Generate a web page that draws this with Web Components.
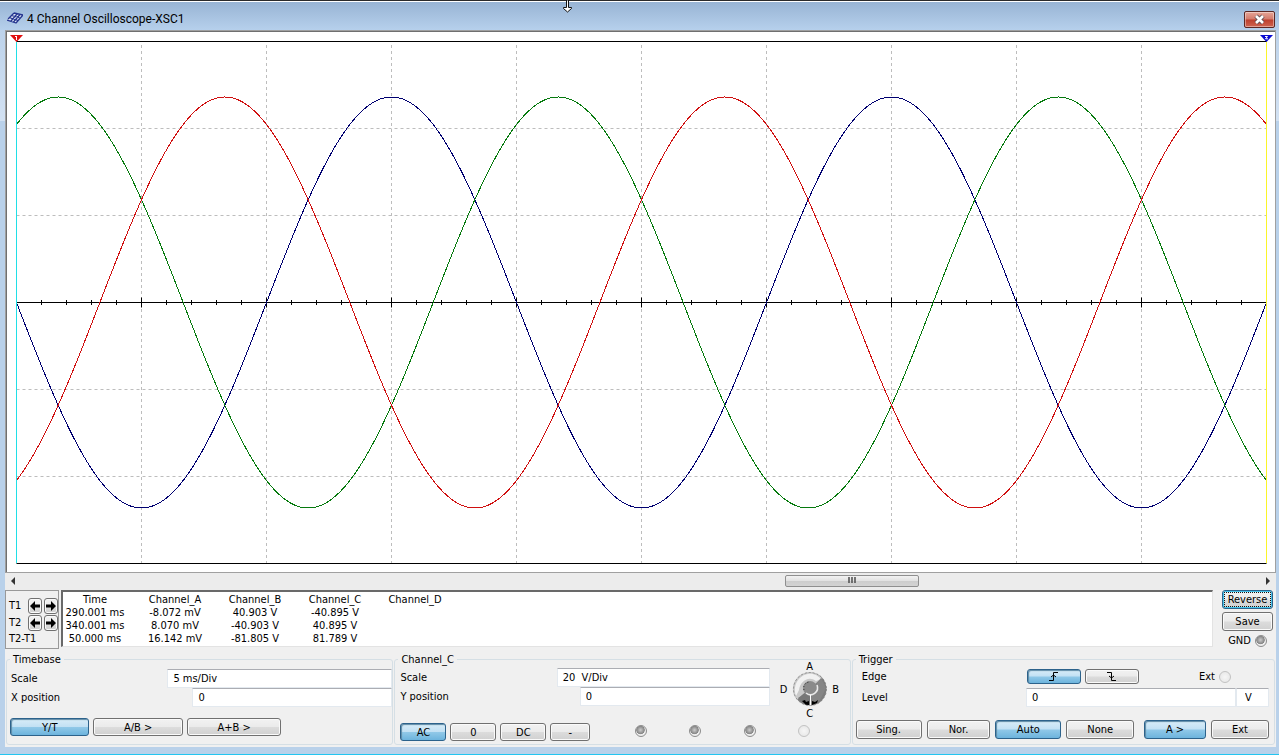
<!DOCTYPE html>
<html lang="en">
<head>
<meta charset="utf-8">
<title>4 Channel Oscilloscope-XSC1</title>
<style>
  body { margin: 0; min-height: 100vh; display: flex; font: 11px/13px "DejaVu Sans Condensed", "Noto Sans", sans-serif; color: #000; }
</style>
</head>
<body>
<scope-window heading="4 Channel Oscilloscope-XSC1">
  <scope-display></scope-display>
  <scope-scrollbar></scope-scrollbar>
  <scope-readout></scope-readout>
  <scope-settings></scope-settings>
</scope-window>

<script>
function define(name, markup, setup) {
  const template = document.createElement('template');
  template.innerHTML = markup;
  customElements.define(name, class extends HTMLElement {
    connectedCallback() {
      if (this.shadowRoot) return;
      this.attachShadow({ mode: 'open' }).append(template.content.cloneNode(true));
      if (setup) setup(this, this.shadowRoot);
    }
  });
}

define('scope-window', `
<style>
  :host { flex: 1; display: flex; flex-direction: column; box-sizing: border-box; position: relative;
    background: linear-gradient(#b9d1ea, #b9d1ea) bottom / 100% calc(100% - 120px) no-repeat, linear-gradient(#b6cee8, #d2e1f2 118px);
    border-top: 1px solid #2a2a2a; border-bottom: 1px solid #22c5f0; }
  header { display: flex; align-items: center; height: 28px; padding: 0 4px 0 7px; gap: 4px; border-top: 1px solid #fff;
    background: linear-gradient(#98b4d4, #b6d0ec); font: 12px/16px Roboto, "Noto Sans", sans-serif; }
  h1 { flex: 1; margin: 0; padding-top: 6px; font: inherit; }
  .icon { margin-top: 3px; }
  .close { width: 31px; height: 17px; margin-top: 6px; padding: 0; display: grid; place-items: center; border: 1px solid #5c2723; border-radius: 2px;
    background: linear-gradient(#e6a597, #d47a6b 48%, #bd3f2d 52%, #cf6450); box-shadow: inset 0 0 0 1px #ffffff66; }
  main { flex: 1; display: flex; flex-direction: column; margin: 0 3px 7px 5px; background: #f0f0f0; }
  .pointer { position: absolute; left: 562px; top: -1px; }
</style>
<header>
  <svg class="icon" width="16" height="12" viewBox="0 0 16 12" aria-hidden="true">
    <path d="M0 7 7 1 16 3 9 11z" fill="#dfe6f5"/>
    <path d="M7 1 16 3M4.500 3.500 13 6M2 5.500 11 8.500M0 8 9 11M7 1 1 7M10 2 4 9M13 2.500 6.500 10M16 3 9 11" stroke="#25358f" stroke-width="1.3" fill="none"/>
  </svg>
  <h1></h1>
  <button class="close" aria-label="Close"><svg width="13" height="11" viewBox="0 0 13 11"><path d="M3 2 10 9M10 2 3 9" stroke="#5d4b51" stroke-width="4.4"/><path d="M3 2 10 9M10 2 3 9" stroke="#fff" stroke-width="2.6"/></svg></button>
</header>
<main><slot></slot></main>
<svg class="pointer" width="11" height="13" viewBox="0 0 11 13" aria-hidden="true"><path d="M4.500 0V7.500H1.500V8.500L5.500 12 9.500 8.500V7.500H6.500V0z" fill="#fff" stroke="#111"/></svg>
`, (host, root) => { root.querySelector('h1').textContent = host.getAttribute('heading'); });

define('scope-display', `
<style>
  :host { flex: 1; display: flex; min-height: 300px; background: #fff; border: solid; border-width: 2px 1px 1px 2px; border-color: #6f6f6f #e3e3e3 #5a5a5a #6f6f6f; outline: 1px solid #a0a0a0; outline-offset: -1px; }
  svg { flex: 1; width: 0; height: auto; }
</style>
<svg viewBox="7 32 1268 540" preserveAspectRatio="none" role="img" aria-label="Three phase waveforms" fill="none" stroke-width="1"></svg>
`, (host, root) => {
  const left = 16.5, width = 1250, top = 41.5, mid = 302.5, bottom = 563.5;
  const period = 500, amplitude = 205.5;
  let grid = '', ticks = '';
  for (let i = 1; i < 10; i++) grid += `M${left + i * 125} 45V${bottom}`;
  for (const k of [-2, -1, 1, 2]) grid += `M${left} ${mid + k * 87}H${left + width}`;
  for (let i = 1; i < 50; i++) {
    const r = i % 5 ? 2.5 : 5;
    ticks += `M${left + i * 25} ${mid - r}V${mid + r}`;
  }
  const wave = peak => {
    let d = '';
    for (let x = 0; x <= width; x += 2) {
      const y = mid - amplitude * Math.cos(2 * Math.PI * (x - peak) / period);
      d += (x ? 'L' : 'M') + (left + x) + ' ' + y.toFixed(2);
    }
    return d;
  };
  root.querySelector('svg').innerHTML = `
    <path d="${grid}" stroke="#bdbdbd" stroke-dasharray="3 3"/>
    <path d="M${left} ${top}H${left + width}M${left} ${bottom}H${left + width}M${left} ${mid}H${left + width}${ticks}" stroke="#000"/>
    <g shape-rendering="crispEdges">
    <path d="${wave(375)}" stroke="#000070"/>
    <path d="${wave(41.67)}" stroke="#067a0e"/>
    <path d="${wave(208.33)}" stroke="#d01010"/></g>
    <path d="M16.500 42V563" stroke="#20dfe6"/>
    <path d="M1266.500 42V563" stroke="#fbf52a"/>
    <path d="M10 35H23L16.500 42z" fill="#e01010"/><path d="M15 36.500H17M16.500 37V40" stroke="#fff"/>
    <path d="M1260 35H1273L1266.500 42z" fill="#0b0bd0"/><path d="M1265 36.500H1267.500L1265.500 38.800H1268" stroke="#fff"/>`;
});

define('scope-scrollbar', `
<style>
  :host { display: flex; align-items: center; height: 15px; padding: 0 4px 2px; background: #ececec; }
  .track { flex: 1; display: grid; grid-template-columns: 768fr 134px 345fr; }
  .thumb { grid-column: 2; box-sizing: border-box; height: 12px; display: grid; place-items: center; border: 1px solid #8f8f8f; border-radius: 2px; background: linear-gradient(#f2f2f2, #e2e2e2 48%, #cdcdcd 52%, #d3d3d3); }
</style>
<svg width="8" height="8" viewBox="0 0 8 8" aria-hidden="true"><path d="M6 0V8L2 4z" fill="#333"/></svg>
<div class="track"><div class="thumb"><svg width="9" height="7" viewBox="0 0 9 7"><path d="M1 0V6M4 0V6M7 0V6" stroke="#555" stroke-width="1.6"/></svg></div></div>
<svg width="8" height="8" viewBox="0 0 8 8" aria-hidden="true"><path d="M2 0V8L6 4z" fill="#333"/></svg>
`);

define('scope-button', `
<style>
  :host { display: grid; min-width: 0; height: var(--button-height, 18px); }
  button { min-width: 0; box-sizing: border-box; display: grid; place-items: center; padding: 0; font: inherit; color: #000; border: 1px solid #707070; border-radius: 3px;
    background: linear-gradient(#f2f2f2, #ebebeb 48%, #dcdcdc 52%, #d0d0d0); box-shadow: inset 0 0 0 1px #fafafa; }
  :host([pressed]) button { border-color: #2c628b; background: linear-gradient(#d8ecf8, #c2e1f4 48%, #90c8e8 52%, #6db4dd); box-shadow: inset 1px 1px 1px #5f8aa5; }
  :host([focused]) button { border-color: #2c628b; box-shadow: inset 0 0 0 1px #46c4ec; outline: 1px dotted #111; outline-offset: -3px; }
</style>
<button type="button"><slot></slot></button>
`, (host, root) => {
  const b = root.querySelector('button');
  if (host.hasAttribute('label')) b.setAttribute('aria-label', host.getAttribute('label'));
  if (host.hasAttribute('pressed')) b.setAttribute('aria-pressed', 'true');
});

define('terminal-pin', `
<style>
  :host { display: block; }
  label { display: flex; align-items: center; gap: 4px; }
  input { appearance: none; box-sizing: border-box; margin: 0; width: 12px; height: 12px; border: 1px solid #8c8c8c; border-radius: 50%; background: radial-gradient(circle at 45% 40%, #ccc, #858585 48%, #eee 56%); }
  :host([empty]) input { border-color: #c2c2c2; background: radial-gradient(#f6f6f6, #e4e4e4); }
</style>
<label><slot></slot><input type="radio"></label>
`, (host, root) => {
  if (!host.textContent.trim()) { root.querySelector('label').style.gap = '0'; root.querySelector('input').setAttribute('aria-label', 'Terminal'); }
});

define('value-field', `
<style>
  :host { display: flex; align-items: center; }
  label { flex: 1; white-space: nowrap; }
  input { box-sizing: border-box; min-width: 0; width: var(--field-width, 200px); height: 19px; padding: 0 5px; font: inherit; color: #000; background: #fff; border: 1px solid #e3e9ef; border-top-color: #abadb3; border-radius: 1px; }
</style>
<label for="value"></label><input id="value">
`, (host, root) => {
  root.querySelector('label').textContent = host.getAttribute('label') || '';
  const input = root.querySelector('input');
  input.value = host.getAttribute('value');
  if (!host.getAttribute('label')) { root.querySelector('label').remove(); input.setAttribute('aria-label', 'Unit'); input.style.paddingLeft = '8px'; }
});

define('scope-readout', `
<style>
  :host { display: grid; grid-template-columns: 54px 1fr 51px; column-gap: 2px; padding-right: 3px; height: 59px; }
  .cursors { box-sizing: border-box; display: grid; grid-template-columns: 17px 14px 14px; column-gap: 2px; grid-template-rows: 17px 17px 14px; align-items: center; padding: 6px 0 0 3px; border: 1px solid #999; white-space: nowrap; --button-height: 16px; }
  .delta { grid-column: 1 / 4; }
  .data { margin: 0 7px 2px 0; border: solid; border-width: 2px 1px 1px 2px; border-color: #696969 #e3e3e3 #e3e3e3 #696969; background: #fff; }
  table { border-collapse: collapse; table-layout: fixed; width: 392px; margin-top: 1px; text-align: center; }
  th, td { box-sizing: border-box; padding: 0; font-weight: normal; white-space: nowrap; width: 80px; }
  th:first-child { width: 72px; }
  th:first-child, td:first-child { padding-right: 8px; }
  .side { display: flex; flex-direction: column; gap: 3px; --button-height: 19px; }
  terminal-pin { align-self: center; }
</style>
<div class="cursors">
  <span>T1</span><scope-button label="T1 left"><svg width="10" height="10" viewBox="0 0 10 10"><path d="M0 5 5 0V3.500H10V6.500H5V10z"/></svg></scope-button><scope-button label="T1 right"><svg width="10" height="10" viewBox="0 0 10 10"><path d="M10 5 5 0V3.500H0V6.500H5V10z"/></svg></scope-button>
  <span>T2</span><scope-button label="T2 left"><svg width="10" height="10" viewBox="0 0 10 10"><path d="M0 5 5 0V3.500H10V6.500H5V10z"/></svg></scope-button><scope-button label="T2 right"><svg width="10" height="10" viewBox="0 0 10 10"><path d="M10 5 5 0V3.500H0V6.500H5V10z"/></svg></scope-button>
  <span class="delta">T2-T1</span>
</div>
<div class="data"><table>
  <thead><tr><th>Time</th><th>Channel_A</th><th>Channel_B</th><th>Channel_C</th><th>Channel_D</th></tr></thead>
  <tbody>
  <tr><td>290.001 ms</td><td>-8.072 mV</td><td>40.903 V</td><td>-40.895 V</td><td></td></tr>
  <tr><td>340.001 ms</td><td>8.070 mV</td><td>-40.903 V</td><td>40.895 V</td><td></td></tr>
  <tr><td>50.000 ms</td><td>16.142 mV</td><td>-81.805 V</td><td>81.789 V</td><td></td></tr>
  </tbody>
</table></div>
<div class="side"><scope-button focused>Reverse</scope-button><scope-button>Save</scope-button><terminal-pin>GND</terminal-pin></div>
`);

define('setting-group', `
<style>
  :host { display: grid; min-width: 0; }
  fieldset { min-width: 0; box-sizing: border-box; margin: 0; padding: 0 0 0 3px; border: 1px solid #d5dfe5; border-radius: 3px; }
  legend { padding: 0 3px; height: 13px; }
</style>
<fieldset><legend></legend><slot></slot></fieldset>
`, (host, root) => { root.querySelector('legend').textContent = host.getAttribute('heading'); });

define('channel-knob', `
<style>
  :host { display: grid; grid-template-columns: 10px 36px 10px; grid-template-rows: 12px 35px 12px; place-items: center; column-gap: 3px; }
  .a, .c { grid-column: 2; }
</style>
<span class="a">A</span>
<span style="grid-column:1">D</span>
<svg width="36" height="35" viewBox="0 0 36 35" role="img" aria-label="Channel selector">
  <circle cx="18" cy="17" r="16.500" fill="#7d7d7d"/>
  <path d="M5 28A16.500 16.500 0 0 1 30 6L23 12 10 23z" fill="#c9c9c9"/>
  <path d="M4 24C0 12 8 3 16 2 22 1 26 4 29 7L24 9C16 3 8 10 7 18z" fill="#f1f1f1"/>
  <path d="M29 6 34 16 28 28 19 32V25L24 20V12z" fill="#858585"/>
  <path d="M6 26 12 22 18 25V32L10 30z" fill="#777"/>
  <circle cx="18" cy="16" r="7" fill="#8a8a8a"/>
  <path d="M14 21A7 7 0 0 0 25 13" stroke="#e9e9e9" stroke-width="1.6" fill="none"/>
  <path d="M12 18A6 6 0 0 1 18 10" stroke="#222" stroke-dasharray="1 2" fill="none"/>
  <path d="M10 29 13 28 14 30 17 29V33H14zM20 29 23 30 26 28 25 31 20 33z" fill="#000"/>
  <path d="M18.500 23V34" stroke="#fff"/>
  <circle cx="18" cy="17" r="16.500" stroke="#777" stroke-dasharray="2 2" stroke-width=".7" fill="none"/>
</svg>
<span>B</span>
<span class="c">C</span>
`);

define('scope-settings', `
<style>
  :host { display: grid; grid-template-columns: 388fr 457fr 424fr; column-gap: 1px; padding: 4px 1px 2px 1px; background: #f0f0f0; }
  .row { display: flex; }
  setting-group { height: 92px; }
  .timebase { padding-top: 3px; }
  .timebase label, .timebase value-field { padding-left: 1px; }
  .timebase .row { margin-top: 11px; gap: 4px; padding-right: 111px; }
  .channel { display: grid; grid-template-columns: 1fr 66px; column-gap: 9px; padding: 0 5px 0 2px; }
  .fields { padding-top: 2px; }
  channel-knob { margin-top: -6px; }
  .channel .buttons { grid-column: 1 / 3; display: grid; grid-template-columns: repeat(3, 46px) 40px 1fr; column-gap: 4px; margin-top: 4px; }
  .pins { display: flex; justify-content: space-between; align-items: center; padding: 0 0 2px 41px; margin-right: 35px; }
  .trigger { padding-top: 3px; --button-height: 15px; }
  .edge { display: grid; grid-template-columns: 1fr 54px 54px 131px; column-gap: 4px; padding-left: 6px; align-items: center; }
  .edge terminal-pin { padding-left: 56px; }
  .level { display: grid; grid-template-columns: 1fr 33px; padding: 4px 5px 0 6px; }
  .trigger .row { --button-height: 19px; margin-top: 13px; gap: 5px; padding-right: 5px; }
</style>
<setting-group heading="Timebase">
  <div class="timebase">
    <value-field label="Scale" value="5 ms/Div" style="--field-width:225px"></value-field>
    <value-field label="X position" value="0" style="--field-width:200px"></value-field>
    <div class="row"><scope-button pressed style="flex:79">Y/T</scope-button><scope-button style="flex:89">A/B &gt;</scope-button><scope-button style="flex:94">A+B &gt;</scope-button></div>
  </div>
</setting-group>
<setting-group heading="Channel_C">
  <div class="channel">
    <div class="fields">
      <value-field label="Scale" value="20  V/Div" style="--field-width:213px"></value-field>
      <value-field label="Y position" value="0" style="--field-width:190px"></value-field>
    </div>
    <channel-knob></channel-knob>
    <div class="buttons"><scope-button pressed>AC</scope-button><scope-button>0</scope-button><scope-button>DC</scope-button><scope-button>-</scope-button>
      <div class="pins"><terminal-pin></terminal-pin><terminal-pin></terminal-pin><terminal-pin></terminal-pin><terminal-pin empty></terminal-pin></div></div>
  </div>
</setting-group>
<setting-group heading="Trigger">
  <div class="trigger">
    <div class="edge"><span>Edge</span>
      <scope-button pressed label="Rising edge"><svg width="11" height="9" viewBox="0 0 11 9"><path d="M1 8.500H5.500V.5H10M3 5 5.500 3 8 5" stroke="#000" fill="none"/></svg></scope-button>
      <scope-button label="Falling edge"><svg width="11" height="9" viewBox="0 0 11 9"><path d="M1 .5H5.500V8.500H10M3 4 5.500 6 8 4" stroke="#000" fill="none"/></svg></scope-button>
      <terminal-pin empty>Ext</terminal-pin></div>
    <div class="level"><value-field label="Level" value="0" style="--field-width:210px"></value-field><value-field value="V" style="--field-width:33px"></value-field></div>
    <div class="row"><scope-button style="flex:67">Sing.</scope-button><scope-button style="flex:65">Nor.</scope-button><scope-button pressed style="flex:67">Auto</scope-button><scope-button style="flex:69">None</scope-button><scope-button pressed style="flex:63;margin-left:5px">A &gt;</scope-button><scope-button style="flex:59">Ext</scope-button></div>
  </div>
</setting-group>
`);
</script>
</body>
</html>
